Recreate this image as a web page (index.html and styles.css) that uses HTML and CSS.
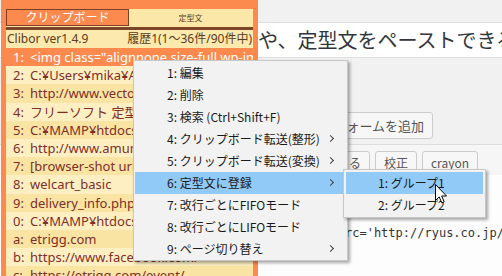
FILE: index.html
```html
<!DOCTYPE html>
<html lang="ja">

<head>
    <meta charset="UTF-8">
    <meta name="viewport" content="width=device-width, initial-scale=1.0">
    <title>Clibor</title>
    <link rel="stylesheet" href="styles.css">
</head>

<body>
    <!-- ブラウザ側 (WordPress の編集画面) -->
    <div class="browser">
        <div class="topbar"></div>
        <div class="title-field">けコピーした複数の文字列や、定型文をペーストできる</div>
        <div class="toolbar">
            <span class="wp-btn wp-btn-large">フォームを追加</span>
        </div>
        <div class="editor">
            <div class="quicktags">
                <span class="wp-btn">閉じる</span>
                <span class="wp-btn">校正</span>
                <span class="wp-btn">crayon</span>
            </div>
            <div class="code">rc='http://ryus.co.jp/wp-content/uploads/</div>
        </div>
    </div>

    <!-- Clibor ウィンドウ -->
    <div class="clibor">
        <div class="tabs">
            <div class="tab tab-active">クリップボード</div>
            <div class="tab">定型文</div>
        </div>
        <div class="sep"></div>
        <div class="info">
            <span>Clibor ver1.4.9</span>
            <span>履歴1(1～36件/90件中)</span>
        </div>
        <ul class="list">
            <li class="selected"><span class="no">1:</span>&lt;img class="alignnone size-full wp-image-1234"</li>
            <li><span class="no">2:</span>C:¥Users¥mika¥AppData¥Local</li>
            <li><span class="no">3:</span>http://www.vector.co.jp/</li>
            <li><span class="no">4:</span>フリーソフト 定型文</li>
            <li><span class="no">5:</span>C:¥MAMP¥htdocs¥wordpress</li>
            <li><span class="no">6:</span>http://www.amunsre.com/</li>
            <li><span class="no">7:</span>[browser-shot url="http://</li>
            <li><span class="no">8:</span>welcart_basic</li>
            <li><span class="no">9:</span>delivery_info.php</li>
            <li><span class="no">0:</span>C:¥MAMP¥htdocs¥wp-content</li>
            <li><span class="no">a:</span>etrigg.com</li>
            <li><span class="no">b:</span>https://www.facebook.com/</li>
            <li><span class="no">c:</span>https://etrigg.com/event/</li>
        </ul>
    </div>

    <!-- 右クリックメニュー -->
    <ul class="menu">
        <li>1: 編集</li>
        <li>2: 削除</li>
        <li>3: 検索 (Ctrl+Shift+F)</li>
        <li class="has-sub">4: クリップボード転送(整形)</li>
        <li class="has-sub">5: クリップボード転送(変換)</li>
        <li class="has-sub hover">6: 定型文に登録</li>
        <li>7: 改行ごとにFIFOモード</li>
        <li>8: 改行ごとにLIFOモード</li>
        <li class="has-sub">9: ページ切り替え</li>
    </ul>

    <ul class="submenu">
        <li class="hover">1: グループ1</li>
        <li>2: グループ2</li>
    </ul>

    <svg class="cursor" width="13" height="20" viewBox="0 0 13 20">
        <path d="M0.5 0.5 L0.5 16.5 L4.2 12.9 L6.8 18.8 L9.2 17.8 L6.7 12 L11.5 12 Z" fill="#fff" stroke="#000" stroke-width="1" stroke-linejoin="miter" />
    </svg>
</body>

</html>
```

FILE: styles.css
```css
body {
    margin: 0;
    background-color: #f1f1f1;
    font-family: "Noto Sans", "Noto Sans CJK JP", sans-serif;
    overflow: hidden;
}

ul {
    list-style: none;
    margin: 0;
    padding: 0;
}

/* ---- ブラウザ側 ---- */
.topbar {
    height: 22px;
    border-bottom: 1px solid #dcdcdc;
}

.title-field {
    height: 34px;
    line-height: 34px;
    background-color: #fff;
    border-bottom: 1px solid #dedede;
    padding-left: 18px;
    font-family: "Noto Sans CJK JP", sans-serif;
    font-size: 20px;
    color: #32373c;
    white-space: nowrap;
    overflow: hidden;
}

.toolbar {
    height: 87px;
    box-sizing: border-box;
    padding: 54px 69px 0 0;
    display: flex;
    justify-content: flex-end;
    align-items: flex-start;
    border-bottom: 1px solid #dddddd;
}

.wp-btn {
    display: inline-block;
    height: 22px;
    line-height: 21px;
    box-sizing: border-box;
    padding: 0 8px;
    border: 1px solid #cccccc;
    border-radius: 3px;
    background-color: #f7f7f7;
    font-family: "Noto Sans CJK JP", sans-serif;
    font-size: 12px;
    color: #555;
}

.wp-btn-large {
    height: 27px;
    line-height: 25px;
    font-size: 13px;
    padding: 0 8px;
}

.editor {
    background-color: #f6f6f6;
}

.quicktags {
    display: flex;
    justify-content: flex-end;
    gap: 5px;
    padding: 6px 24px 2px 0;
}

.code {
    background-color: #fdfdfd;
    padding: 49px 0 40px 345px;
    line-height: 18px;
    font-family: "DejaVu Sans Mono", monospace;
    font-size: 12px;
    color: #333;
    white-space: nowrap;
    overflow: hidden;
}

/* ---- Clibor ---- */
.clibor {
    position: absolute;
    left: 1px;
    top: 0;
    width: 257px;
    height: 300px;
    box-sizing: border-box;
    padding: 9px 5px 0 5px;
    background-color: #fc8a4f;
    font-size: 12px;
    overflow: hidden;
}

.tabs {
    display: flex;
    height: 18px;
    background-color: #fbe8a8;
}

.tab {
    width: 123px;
    text-align: center;
    font-family: "Noto Sans CJK JP", sans-serif;
    font-size: 8px;
    line-height: 18px;
    color: #5a3a22;
}

.tab-active {
    box-sizing: border-box;
    height: 17px;
    border: 1px solid #7b3f22;
    background-color: #fc8a4f;
    color: #fff;
    font-size: 12px;
    line-height: 14px;
}

.sep {
    height: 3px;
    background-color: #7e4428;
}

.info {
    display: flex;
    justify-content: space-between;
    height: 18px;
    line-height: 18px;
    padding: 0 1px 0 1px;
    background-color: #fbe9ad;
    color: #5b3b22;
    white-space: nowrap;
}

.list li {
    height: 18.2px;
    line-height: 18px;
    padding-left: 7px;
    font-size: 13px;
    color: #7e2f2a;
    white-space: nowrap;
    overflow: hidden;
}

.list li:nth-child(even) {
    background-color: #fdefc2;
}

.list li:nth-child(odd) {
    background-color: #f9e4a3;
}

.list li.selected {
    background-color: #fc8a4f;
    color: #fff;
}

.no {
    display: inline-block;
    width: 17px;
}

/* ---- コンテキストメニュー ---- */
.menu,
.submenu {
    position: absolute;
    box-sizing: border-box;
    background-color: #f2f2f2;
    border: 1px solid #c8c8c8;
    box-shadow: 2px 2px 3px rgba(0, 0, 0, 0.35);
    font-family: "Noto Sans CJK JP", sans-serif;
    font-size: 12px;
    color: #1a1a1a;
}

.menu {
    left: 133px;
    top: 60px;
    width: 215px;
    height: 201px;
    padding: 1px 4px 0 1px;
}

.submenu {
    left: 343px;
    top: 169px;
    width: 143px;
    height: 49px;
    padding: 2px 2px 0 2px;
}

.menu li,
.submenu li {
    position: relative;
    height: 22px;
    line-height: 22px;
    padding-left: 32px;
    white-space: nowrap;
}

.menu li.hover,
.submenu li.hover {
    background-color: #91c9f7;
}

.menu li.has-sub::after {
    content: "";
    position: absolute;
    right: 10px;
    top: 8px;
    width: 4px;
    height: 4px;
    border-top: 1px solid #444;
    border-right: 1px solid #444;
    transform: rotate(45deg);
}

.cursor {
    position: absolute;
    left: 435px;
    top: 184px;
}
```
